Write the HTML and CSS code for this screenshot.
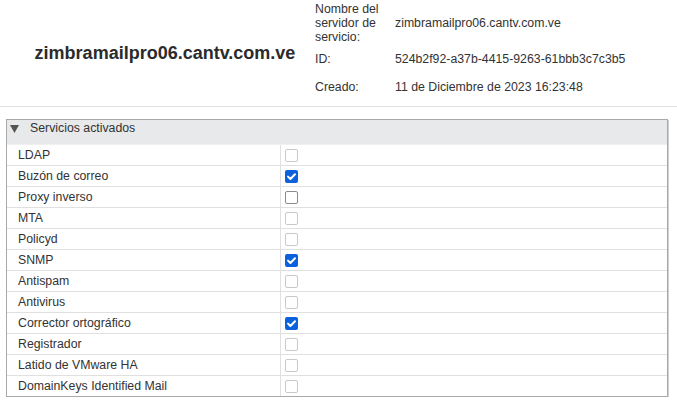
FILE: index.html
```html
<!DOCTYPE html>
<html lang="es">
<head>
<meta charset="utf-8">
<title>Servidor</title>
<link rel="stylesheet" href="styles.css">
</head>
<body>
<header class="summary">
  <div class="title-cell"><h1 class="title">zimbramailpro06.cantv.com.ve</h1></div>
  <dl class="props">
    <dt class="lbl">Nombre del servidor de servicio:</dt>
    <dd class="val mid">zimbramailpro06.cantv.com.ve</dd>
    <dt class="lbl">ID:</dt>
    <dd class="val">524b2f92-a37b-4415-9263-61bbb3c7c3b5</dd>
    <dt class="lbl late">Creado:</dt>
    <dd class="val late">11 de Diciembre de 2023 16:23:48</dd>
  </dl>
</header>

<section class="panel">
  <div class="panel-head">
    <svg class="caret" width="9" height="8" viewBox="0 0 9 8"><polygon points="0,0 9,0 4.5,8" fill="#555"/></svg>
    <span>Servicios activados</span>
  </div>
  <div class="rows">
    <div class="row"><div class="name">LDAP</div><div class="cell"><span class="cb dis"></span></div></div>
    <div class="row"><div class="name">Buzón de correo</div><div class="cell"><span class="cb on"><svg width="13" height="13" viewBox="0 0 13 13"><path d="M3 6.6 L5.4 9 L10 4.2" fill="none" stroke="#fff" stroke-width="2" stroke-linecap="round" stroke-linejoin="round"/></svg></span></div></div>
    <div class="row"><div class="name">Proxy inverso</div><div class="cell"><span class="cb off"></span></div></div>
    <div class="row"><div class="name">MTA</div><div class="cell"><span class="cb dis"></span></div></div>
    <div class="row"><div class="name">Policyd</div><div class="cell"><span class="cb dis"></span></div></div>
    <div class="row"><div class="name">SNMP</div><div class="cell"><span class="cb on"><svg width="13" height="13" viewBox="0 0 13 13"><path d="M3 6.6 L5.4 9 L10 4.2" fill="none" stroke="#fff" stroke-width="2" stroke-linecap="round" stroke-linejoin="round"/></svg></span></div></div>
    <div class="row"><div class="name">Antispam</div><div class="cell"><span class="cb dis"></span></div></div>
    <div class="row"><div class="name">Antivirus</div><div class="cell"><span class="cb dis"></span></div></div>
    <div class="row"><div class="name">Corrector ortográfico</div><div class="cell"><span class="cb on"><svg width="13" height="13" viewBox="0 0 13 13"><path d="M3 6.6 L5.4 9 L10 4.2" fill="none" stroke="#fff" stroke-width="2" stroke-linecap="round" stroke-linejoin="round"/></svg></span></div></div>
    <div class="row"><div class="name">Registrador</div><div class="cell"><span class="cb dis"></span></div></div>
    <div class="row"><div class="name">Latido de VMware HA</div><div class="cell"><span class="cb dis"></span></div></div>
    <div class="row"><div class="name">DomainKeys Identified Mail</div><div class="cell"><span class="cb dis"></span></div></div>
  </div>
</section>
</body>
</html>
```
FILE: styles.css
```css
html, body {
  margin: 0;
  padding: 0;
  background: #fff;
}
body {
  font-family: "Liberation Sans", Arial, sans-serif;
  font-size: 12.3px;
  color: #333;
}
.summary {
  display: flex;
  height: 106px;
  border-bottom: 1px solid #e2e2e2;
}
.title-cell {
  width: 300px;
  padding-left: 15px;
  display: flex;
  align-items: center;
  justify-content: center;
}
.title {
  margin: 0;
  font-size: 18px;
  font-weight: bold;
  color: #2b2b2b;
  white-space: nowrap;
}
.props {
  margin: 0;
  padding-top: 2px;
  display: grid;
  grid-template-columns: 80px auto;
  grid-auto-rows: auto;
  row-gap: 8px;
  align-content: start;
  line-height: 14px;
}
.lbl {
  margin: 0;
  width: 72px;
}
.val {
  margin: 0;
  white-space: nowrap;
}
.val.mid {
  align-self: center;
}
.late {
  padding-top: 6px;
}
.panel {
  margin: 12px 9px 0 6px;
  border: 1px solid #a9a9a9;
  box-shadow: 1px 1px 0 #cfcfcf;
}
.panel-head {
  height: 24px;
  background: #e8e9eb;
  display: flex;
  align-items: flex-start;
  padding-top: 1px;
  box-sizing: border-box;
  line-height: 14px;
}
.caret {
  margin: 4px 0 0 3px;
}
.panel-head span {
  margin-left: 11px;
}
.rows {
  display: flex;
  flex-direction: column;
}
.row {
  display: grid;
  grid-template-columns: 274px 1fr;
  height: 20px;
  border-top: 1px solid #e0e0e0;
}
.row:first-child {
  border-top: 1px solid #f0f0f0;
}
.name {
  padding-left: 11px;
  line-height: 20px;
  border-right: 1px solid #e0e0e0;
}
.cell {
  display: flex;
  align-items: center;
  padding-left: 4px;
}
.cb {
  width: 13px;
  height: 13px;
  box-sizing: border-box;
  border-radius: 2px;
  display: block;
}
.cb.dis {
  border: 1.5px solid #c9c9cc;
}
.cb.off {
  border: 1.5px solid #8a8a95;
}
.cb.on {
  background: #0b62dc;
}
.cb.on svg {
  display: block;
}
```
